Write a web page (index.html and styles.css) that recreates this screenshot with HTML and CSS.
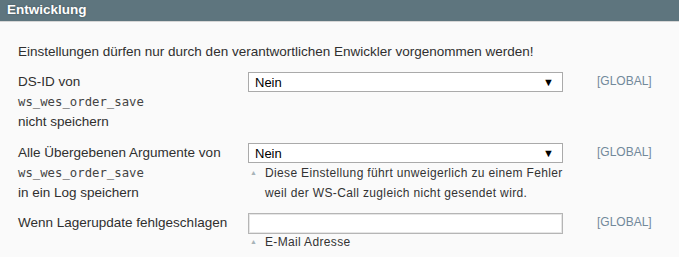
FILE: index.html
```html
<!DOCTYPE html>
<html lang="de">
<head>
    <meta charset="UTF-8">
    <title>Entwicklung</title>
    <link rel="stylesheet" href="styles.css">
</head>
<body>
    <div class="section">
        <div class="section-head">Entwicklung</div>
        <div class="section-body">
            <p class="intro">Einstellungen dürfen nur durch den verantwortlichen Enwickler vorgenommen werden!</p>

            <div class="form-row">
                <div class="label">DS-ID von<br><code>ws_wes_order_save</code><br>nicht speichern</div>
                <div class="value">
                    <div class="select"><span>Nein</span><span class="arrow">&#9660;</span></div>
                </div>
                <div class="scope">[GLOBAL]</div>
            </div>

            <div class="form-row">
                <div class="label">Alle Übergebenen Argumente von<br><code>ws_wes_order_save</code><br>in ein Log speichern</div>
                <div class="value">
                    <div class="select"><span>Nein</span><span class="arrow">&#9660;</span></div>
                    <p class="note"><span class="tip">&#9650;</span><span>Diese Einstellung führt unweigerlich zu einem Fehler<br>weil der WS-Call zugleich nicht gesendet wird.</span></p>
                </div>
                <div class="scope">[GLOBAL]</div>
            </div>

            <div class="form-row">
                <div class="label">Wenn Lagerupdate fehlgeschlagen</div>
                <div class="value">
                    <div class="input"></div>
                    <p class="note note-short"><span class="tip">&#9650;</span><span>E-Mail Adresse</span></p>
                </div>
                <div class="scope">[GLOBAL]</div>
            </div>
        </div>
    </div>
</body>
</html>
```

FILE: styles.css
```css
body {
    margin: 0;
    padding: 0;
    font-family: "Liberation Sans", Arial, sans-serif;
    font-size: 13.5px;
    color: #2f2f2f;
    background-color: #fafafa;
}

/* Section header */
.section-head {
    height: 21px;
    line-height: 19px;
    padding-left: 7px;
    background-color: #5e757e;
    border-bottom: 1px solid #d6d6d6;
    color: #fff;
    font-weight: bold;
    font-size: 13.5px;
    text-shadow: 0 0 2px rgba(0, 0, 0, 0.35);
}

.section-body {
    padding: 0 0 0 18px;
}

.intro {
    margin: 0;
    padding-top: 20px;
    line-height: 20px;
    height: 20px;
}

/* Form rows */
.form-row {
    display: grid;
    grid-template-columns: 230px 315px auto;
    margin-top: 11px;
}

.intro + .form-row {
    margin-top: 10px;
}

.form-row:last-child {
    margin-top: 10px;
}

.label {
    line-height: 20px;
}

.label code {
    font-family: "DejaVu Sans Mono", monospace;
    font-size: 12.3px;
    color: #444;
}

.select {
    height: 20px;
    border: 1px solid #aaa;
    background-color: #fff;
    box-sizing: border-box;
    display: flex;
    align-items: center;
    justify-content: space-between;
    padding: 0 8px 0 6px;
    font-size: 13px;
    color: #000;
}

.select .arrow {
    font-size: 11px;
}

.input {
    height: 21px;
    border: 1px solid #b5b5b5;
    box-shadow: inset 0 0 0 1px #e6e6e6;
    background-color: #fff;
    box-sizing: border-box;
}

.note {
    margin: 0;
    display: flex;
    white-space: nowrap;
    font-size: 12px;
    letter-spacing: 0.35px;
    line-height: 20px;
    color: #333;
}

.note-short {
    line-height: 16px;
}

.tip {
    width: 15px;
    padding-left: 2px;
    font-size: 7px;
    letter-spacing: 0;
    color: #a8b3b8;
    flex-shrink: 0;
}

.scope {
    padding-left: 34px;
    line-height: 18px;
    font-size: 12px;
    color: #72899a;
}
```
